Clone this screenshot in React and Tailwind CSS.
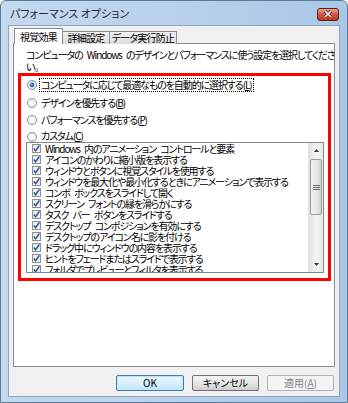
import React from "react";

const options = [
  "Windows 内のアニメーション コントロールと要素",
  "アイコンのかわりに縮小版を表示する",
  "ウィンドウとボタンに視覚スタイルを使用する",
  "ウィンドウを最大化や最小化するときにアニメーションで表示する",
  "コンボ ボックスをスライドして開く",
  "スクリーン フォントの縁を滑らかにする",
  "タスク バー ボタンをスライドする",
  "デスクトップ コンポジションを有効にする",
  "デスクトップのアイコン名に影を付ける",
  "ドラッグ中にウィンドウの内容を表示する",
  "ヒントをフェードまたはスライドで表示する",
  "フォルダでプレビューとフィルタを表示する",
];

const Check = () => (
  <svg width="9" height="9" viewBox="0 0 9 9" className="shrink-0">
    <rect x="0.5" y="0.5" width="8" height="8" fill="#f6f6f6" stroke="#8e8f8f" />
    <rect x="1.5" y="1.5" width="6" height="6" fill="#ececec" />
    <path d="M1.8 4.6 L3.6 6.7 L7.4 1.4" stroke="#2d54a8" strokeWidth="1.5" fill="none" />
  </svg>
);

const Radio = ({ on }) => (
  <svg width="10" height="10" viewBox="0 0 10 10" className="shrink-0">
    <circle cx="5" cy="5" r="4.5" fill="#e9e9e9" stroke="#8e8f8f" />
    <circle cx="5" cy="5" r="3.3" fill="#f7f7f7" />
    {on ? <circle cx="5" cy="5" r="2.4" fill="#2c6fc7" /> : null}
    {on ? <circle cx="4.4" cy="4.3" r="0.9" fill="#8cc0f0" /> : null}
  </svg>
);

const RadioRow = ({ on, label, hotkey, focus, className }) => (
  <div className={`flex items-center gap-[3px] pl-[6px] ${className}`}>
    <Radio on={on} />
    <span className={`leading-[12px] px-[1px] whitespace-nowrap ${focus ? "outline-1 outline-dotted outline-black" : ""}`}>
      {label}(<span className="underline">{hotkey}</span>)
    </span>
  </div>
);

export default function App() {
  return (
    <div className="w-[348px] h-[403px] flex flex-col px-[7px] pb-[5px] rounded-t-[6px] border border-[#5b7a99] bg-gradient-to-r from-[#c4d9ee] via-[#b9d1ea] to-[#a9c7e6] text-black [font-family:'Noto_Sans_CJK_JP','Noto_Sans',sans-serif] [font-feature-settings:'palt']">
      {/* title bar */}
      <div className="h-[24px] flex items-center justify-between pl-[2px] pr-[1px]">
        <span className="text-[11px] text-[#1e2a38]">パフォーマンス オプション</span>
        <div className="w-[22px] h-[13px] mt-[2px] rounded-[3px] border border-[#5e1f16] bg-gradient-to-b from-[#e9a190] via-[#d0553f] to-[#c23a22] flex items-center justify-center">
          <svg width="10" height="8" viewBox="0 0 10 8">
            <path d="M2 1 L8 7 M8 1 L2 7" stroke="#5a1a10" strokeWidth="3" />
            <path d="M2 1 L8 7 M8 1 L2 7" stroke="#ffffff" strokeWidth="1.6" />
          </svg>
        </div>
      </div>

      {/* client area */}
      <div className="flex-1 flex flex-col bg-[#f0f0f0] border border-[#8ea6c0] pl-[4px] pt-[2px]">
        {/* tabs */}
        <div className="flex items-end ml-[1px] relative z-10 -mb-px text-[10px] tracking-[-0.8px] whitespace-nowrap">
          <div className="w-[49px] h-[16px] bg-white border border-b-0 border-[#898c95] flex items-center justify-center leading-none">
            視覚効果
          </div>
          <div className="w-[47px] h-[13px] border border-l-0 border-b-0 border-[#898c95] bg-gradient-to-b from-[#f2f2f2] to-[#dcdcdc] flex items-center justify-center leading-none">
            詳細設定
          </div>
          <div className="w-[67px] h-[13px] border border-l-0 border-b-0 border-[#898c95] bg-gradient-to-b from-[#f2f2f2] to-[#dcdcdc] flex items-center justify-center leading-none">
            データ実行防止
          </div>
        </div>

        {/* panel */}
        <div className="w-[322px] h-[324px] bg-white border border-[#898c95] text-[10px] tracking-[-1.1px] [word-spacing:3px] flex flex-col">
          <p className="pl-[12px] pt-[5px] leading-[12px] whitespace-nowrap">
            コンピュータの Windows のデザインとパフォーマンスに使う設定を選択してくださ
            <br />
            い。
          </p>

          <div className="ml-[4px] w-[313px] border-[3px] border-[#ff0000] flex flex-col">
            <RadioRow on focus className="h-[18px]" label="コンピュータに応じて最適なものを自動的に選択する" hotkey="L" />
            <RadioRow className="h-[17px]" label="デザインを優先する" hotkey="B" />
            <RadioRow className="h-[17px]" label="パフォーマンスを優先する" hotkey="P" />
            <RadioRow className="h-[14px] items-end" label="カスタム" hotkey="C" />

            <div className="ml-[5px] mb-[5px] w-[298px] h-[131px] border border-[#828790] flex overflow-hidden">
              <div className="flex-1 flex flex-col pl-[5px] overflow-hidden">
                {options.map((o) => (
                  <div key={o} className="h-[11px] shrink-0 flex items-center gap-[4px] whitespace-nowrap leading-[11px]">
                    <Check />
                    <span>{o}</span>
                  </div>
                ))}
              </div>

              {/* scrollbar */}
              <div className="w-[15px] flex flex-col bg-gradient-to-r from-[#e3e3e3] via-[#f4f4f4] to-[#e8e8e8] border-l border-[#e0e0e0]">
                <div className="h-[15px] flex items-center justify-center">
                  <svg width="5" height="3" viewBox="0 0 5 3">
                    <path d="M0 3 L2.5 0 L5 3 Z" fill="#3a3a3a" />
                  </svg>
                </div>
                <div className="mx-[1px] mt-[1px] h-[56px] rounded-[2px] border border-[#9a9a9a] bg-gradient-to-r from-[#f2f2f2] via-[#e8e8e8] to-[#d4d4d4] flex items-center justify-center">
                  <svg width="7" height="7" viewBox="0 0 7 7">
                    <path d="M0 1.5 H7 M0 3.5 H7 M0 5.5 H7" stroke="#6a6a6a" strokeWidth="1" />
                  </svg>
                </div>
                <div className="flex-1" />
                <div className="h-[15px] flex items-center justify-center">
                  <svg width="5" height="3" viewBox="0 0 5 3">
                    <path d="M0 0 L2.5 3 L5 0 Z" fill="#3a3a3a" />
                  </svg>
                </div>
              </div>
            </div>
          </div>
        </div>

        {/* buttons */}
        <div className="flex justify-end gap-[8px] pr-[5px] mt-[8px] text-[10px]">
          <button className="w-[68px] h-[16px] rounded-[2px] border border-[#3c7fb1] bg-gradient-to-b from-[#eaf6fd] via-[#d9f0fc] to-[#bee6fd] leading-none shadow-[inset_0_0_0_1px_#c2e4f6]">
            OK
          </button>
          <button className="w-[67px] h-[16px] rounded-[2px] border border-[#707070] bg-gradient-to-b from-[#f2f2f2] via-[#e6e6e6] to-[#cfcfcf] leading-none">
            キャンセル
          </button>
          <button className="w-[67px] h-[16px] rounded-[2px] border border-[#adb2b5] bg-[#f4f4f4] text-[#838383] leading-none">
            適用(<span className="underline">A</span>)
          </button>
        </div>
      </div>
    </div>
  );
}
